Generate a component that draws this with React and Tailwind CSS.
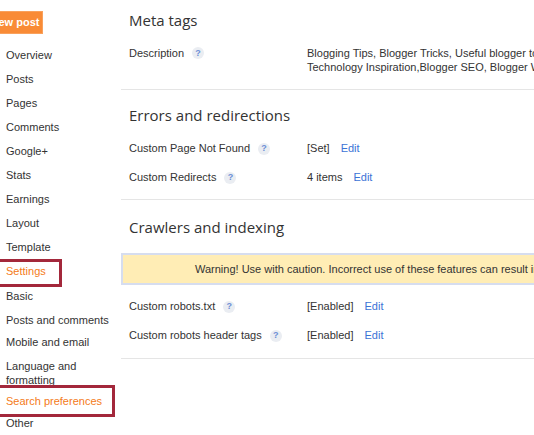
import React from 'react';

const navItems = ['Overview', 'Posts', 'Pages', 'Comments', 'Google+', 'Stats', 'Earnings', 'Layout', 'Template'];

function Help() {
  return (
    <span className="ml-[8px] inline-flex h-[12px] w-[12px] items-center justify-center rounded-full bg-[#eaedf2] text-[9px] font-bold leading-none text-[#6d8fd6]">
      ?
    </span>
  );
}

function Row({ label, children, className = 'h-[29px]' }) {
  return (
    <div className={`flex items-center pl-[8px] ${className}`}>
      <div className="flex w-[178px] items-center">
        <span>{label}</span>
        <Help />
      </div>
      <div className="flex items-center gap-[11px]">{children}</div>
    </div>
  );
}

function Edit() {
  return <a className="cursor-pointer text-[#3b73d6]">Edit</a>;
}

function Heading({ children, className }) {
  return (
    <h2 className={`flex items-center pl-[8px] font-['Open_Sans',sans-serif] text-[15px] text-[#333] ${className}`}>
      {children}
    </h2>
  );
}

export default function App() {
  return (
    <div className="relative flex h-[435px] w-[534px] overflow-hidden bg-white font-['Liberation_Sans',Arial,sans-serif] text-[11px] text-[#333]">
      {/* sidebar */}
      <aside className="w-[121px] shrink-0">
        <div className="mt-[11px] ml-[-13px] flex h-[23px] w-[56px] items-center justify-center border border-[#f9a15c] bg-[#f98b36] text-[11px] font-bold text-white">
          New post
        </div>
        <nav className="mt-[9px]">
          {navItems.map((item) => (
            <div key={item} className="flex h-[24px] items-center pl-[6px]">
              {item}
            </div>
          ))}
          <div className="flex h-[24px] items-center pl-[6px] text-[#f47b20]">Settings</div>
          <div className="flex h-[26px] items-center pl-[6px]">Basic</div>
          <div className="flex h-[22px] items-center pl-[6px]">Posts and comments</div>
          <div className="flex h-[22px] items-center pl-[6px]">Mobile and email</div>
          <div className="pt-[6px] pb-[4px] pl-[6px] leading-[14px]">
            Language and
            <br />
            formatting
          </div>
          <div className="flex h-[20px] items-center pl-[6px] text-[#f47b20]">Search preferences</div>
          <div className="flex h-[24px] items-center pl-[6px]">Other</div>
        </nav>
      </aside>

      {/* main */}
      <main className="w-[640px] shrink-0">
        <section className="border-b border-[#e5e5e5] pb-[15px]">
          <Heading className="h-[40px]">Meta tags</Heading>
          <div className="mt-[6px] flex pl-[8px] leading-[14px]">
            <div className="flex w-[178px] items-start">
              <span>Description</span>
              <span className="mt-[1px] flex">
                <Help />
              </span>
            </div>
            <div className="whitespace-nowrap">
              Blogging Tips, Blogger Tricks, Useful blogger tools, Blogger Templates
              <br />
              Technology Inspiration,Blogger SEO, Blogger Widgets
            </div>
          </div>
        </section>

        <section className="border-b border-[#e5e5e5] pt-[6px] pb-[7px]">
          <Heading className="h-[38px]">Errors and redirections</Heading>
          <Row label="Custom Page Not Found">
            <span>[Set]</span>
            <Edit />
          </Row>
          <Row label="Custom Redirects">
            <span>4 items</span>
            <Edit />
          </Row>
        </section>

        <section className="border-b border-[#e5e5e5] pt-[8px] pb-[8px]">
          <Heading className="h-[38px]">Crawlers and indexing</Heading>
          <div className="mt-[7px] flex h-[32px] items-center whitespace-nowrap border-2 border-[#d6ddef] bg-[#ffedb5] pl-[72px]">
            Warning! Use with caution. Incorrect use of these features can result in your blog being ignored by search engines.
          </div>
          <div className="mt-[7px]">
            <Row label="Custom robots.txt">
              <span>[Enabled]</span>
              <Edit />
            </Row>
            <Row label="Custom robots header tags">
              <span>[Enabled]</span>
              <Edit />
            </Row>
          </div>
        </section>
      </main>

      {/* red highlight annotations */}
      <div className="pointer-events-none absolute left-[-6px] top-[259px] h-[28px] w-[68px] border-[3px] border-[#a3283b]" />
      <div className="pointer-events-none absolute left-[-6px] top-[385px] h-[32px] w-[121px] border-[3px] border-[#a3283b]" />
    </div>
  );
}
